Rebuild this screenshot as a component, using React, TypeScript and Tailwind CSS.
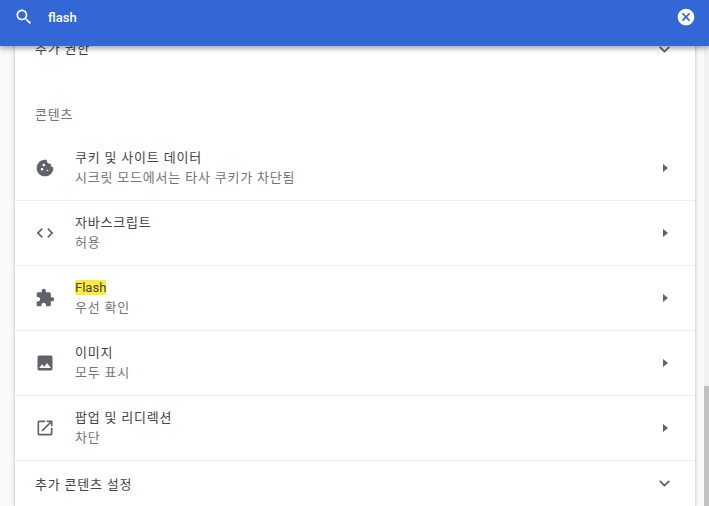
import { ChevronDown } from "lucide-react";
import type { ReactNode } from "react";

const CookieIcon = () => (
  <svg viewBox="0 0 24 24" className="w-5 h-5 fill-[#5f6368]">
    <path d="M21.95 10.99c-1.79-.03-3.7-1.95-2.68-4.22-2.98 1-5.77-1.59-5.19-4.56C6.95.71 2 6.58 2 12c0 5.52 4.48 10 10 10 5.89 0 10.54-5.08 9.95-11.01zM8.5 15c-.83 0-1.5-.67-1.5-1.5S7.67 12 8.5 12s1.5.67 1.5 1.5S9.33 15 8.5 15zm2-5C9.67 10 9 9.33 9 8.5S9.67 7 10.5 7s1.5.67 1.5 1.5-.67 1.5-1.5 1.5zm4.5 6c-.55 0-1-.45-1-1s.45-1 1-1 1 .45 1 1-.45 1-1 1z" />
  </svg>
);

const CodeIcon = () => (
  <svg viewBox="0 0 24 24" className="w-5 h-5 fill-[#5f6368]">
    <path d="M9.4 16.6L4.8 12l4.6-4.6L8 6l-6 6 6 6 1.4-1.4zm5.2 0l4.6-4.6-4.6-4.6L16 6l6 6-6 6-1.4-1.4z" />
  </svg>
);

const PuzzleIcon = () => (
  <svg viewBox="0 0 24 24" className="w-5 h-5 fill-[#5f6368]">
    <path d="M20.5 11H19V7c0-1.1-.9-2-2-2h-4V3.5C13 2.12 11.88 1 10.5 1S8 2.12 8 3.5V5H4c-1.1 0-1.99.9-1.99 2v3.8H3.5c1.49 0 2.7 1.21 2.7 2.7s-1.21 2.7-2.7 2.7H2V20c0 1.1.9 2 2 2h3.8v-1.5c0-1.49 1.21-2.7 2.7-2.7 1.49 0 2.7 1.21 2.7 2.7V22H17c1.1 0 2-.9 2-2v-4h1.5c1.38 0 2.5-1.12 2.5-2.5S21.88 11 20.5 11z" />
  </svg>
);

const ImageIcon = () => (
  <svg viewBox="0 0 24 24" className="w-5 h-5 fill-[#5f6368]">
    <path d="M21 19V5c0-1.1-.9-2-2-2H5c-1.1 0-2 .9-2 2v14c0 1.1.9 2 2 2h14c1.1 0 2-.9 2-2zM8.5 13.5l2.5 3.01L14.5 12l4.5 6H5l3.5-4.5z" />
  </svg>
);

const OpenIcon = () => (
  <svg viewBox="0 0 24 24" className="w-5 h-5 fill-[#5f6368]">
    <path d="M19 19H5V5h7V3H5c-1.11 0-2 .9-2 2v14c0 1.1.89 2 2 2h14c1.1 0 2-.9 2-2v-7h-2v7zM14 3v2h3.59l-9.83 9.83 1.41 1.41L19 6.41V10h2V3h-7z" />
  </svg>
);

interface IRow {
  title: ReactNode;
  sub: string;
  icon: ReactNode;
}

const rows: IRow[] = [
  { title: "쿠키 및 사이트 데이터", sub: "시크릿 모드에서는 타사 쿠키가 차단됨", icon: <CookieIcon /> },
  { title: "자바스크립트", sub: "허용", icon: <CodeIcon /> },
  { title: <mark className="bg-[#ffeb3b] tracking-normal text-[#444444]">Flash</mark>, sub: "우선 확인", icon: <PuzzleIcon /> },
  { title: "이미지", sub: "모두 표시", icon: <ImageIcon /> },
  { title: "팝업 및 리디렉션", sub: "차단", icon: <OpenIcon /> },
];

const App = () => {
  return (
    <div className="relative h-[506px] w-[709px] overflow-hidden bg-[#f8f9fa] font-['Roboto','Noto_Sans_CJK_KR',sans-serif] text-[13px] leading-[20px] text-[#444444]">
      <header className="absolute inset-x-0 top-0 z-10 flex h-[46px] items-start bg-[#3367d6] pl-[14px] pr-[13px] pt-[7px] shadow-[0_2px_6px_rgba(0,0,0,0.4)]">
        <svg viewBox="0 0 24 24" className="h-5 w-5 fill-white">
          <path d="M15.5 14h-.79l-.28-.27C15.41 12.59 16 11.11 16 9.5 16 5.91 13.09 3 9.5 3S3 5.91 3 9.5 5.91 16 9.5 16c1.61 0 3.09-.59 4.23-1.57l.27.28v.79l5 4.99L20.49 19l-4.99-5zm-6 0C7.01 14 5 11.99 5 9.5S7.01 5 9.5 5 14 7.01 14 9.5 11.99 14 9.5 14z" />
        </svg>
        <span className="ml-[14px] flex-1 pt-[1px] text-[13px] font-medium text-white">flash</span>
        <svg viewBox="0 0 24 24" className="h-5 w-5 fill-white">
          <path d="M12 2C6.47 2 2 6.47 2 12s4.47 10 10 10 10-4.47 10-10S17.53 2 12 2zm5 13.59L15.59 17 12 13.41 8.41 17 7 15.59 10.59 12 7 8.41 8.41 7 12 10.59 15.59 7 17 8.41 13.41 12 17 15.59z" />
        </svg>
      </header>

      <div className="flex h-full">
        <main className="ml-[14px] flex w-[682px] flex-col border-x border-[#dadce0] bg-white shadow-[0_0_3px_rgba(60,64,67,0.2)]">
          <div className="mt-[25px] flex h-[48px] shrink-0 items-center pl-[20px] pr-[22px]">
            <span className="flex-1 tracking-[0.8px]">추가 권한</span>
            <ChevronDown className="h-[17px] w-[17px] text-[#5f6368]" strokeWidth={2.6} />
          </div>

          <h2 className="mt-[32px] h-[31px] shrink-0 pl-[20px] text-[13px] font-normal leading-[20px] tracking-[0.8px] text-[#757575]">
            콘텐츠
          </h2>

          {rows.map((row, index) => (
            <div key={index} className="flex h-[65px] shrink-0 items-center border-b border-[#eeeeee] pl-[20px] pr-[27px]">
              <span className="flex w-[40px] shrink-0">{row.icon}</span>
              <div className="flex h-[40px] flex-1 flex-col">
                <span className="tracking-[0.8px]">{row.title}</span>
                <span className="tracking-[0.8px] text-[#757575]">{row.sub}</span>
              </div>
              <span className="h-0 w-0 border-y-[4.5px] border-l-[5px] border-y-transparent border-l-[#5f6368]" />
            </div>
          ))}

          <div className="flex h-[45px] shrink-0 items-center pl-[20px] pr-[22px]">
            <span className="flex-1 pt-[2px] tracking-[0.8px]">추가 콘텐츠 설정</span>
            <ChevronDown className="h-[17px] w-[17px] text-[#5f6368]" strokeWidth={2.6} />
          </div>
        </main>

        <aside className="ml-[8px] flex w-[5px] flex-col bg-[#f1f1f1]">
          <div className="mt-[386px] flex-1 bg-[#c1c1c1]" />
        </aside>
      </div>
    </div>
  );
};

export default App;
